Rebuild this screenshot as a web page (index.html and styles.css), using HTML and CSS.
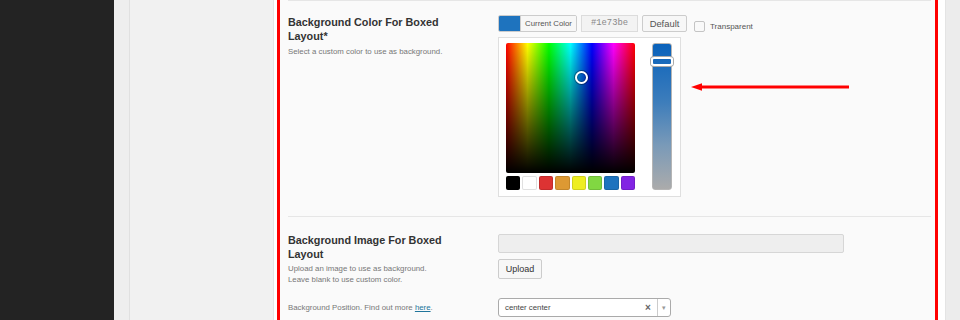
FILE: index.html
```html
<!DOCTYPE html>
<html lang="en">
<head>
    <meta charset="UTF-8">
    <title>Theme Options</title>
    <link rel="stylesheet" href="styles.css">
</head>
<body>

    <div class="sidebar"></div>
    <div class="gutter"></div>
    <div class="subnav"></div>

    <div class="main">
        <div class="highlight">

            <!-- Background colour -->
            <div class="field">
                <div class="field-label">
                    <h4>Background Color For Boxed Layout*</h4>
                    <p class="desc">Select a custom color to use as background.</p>
                </div>
                <div class="field-control">
                    <div class="color-controls">
                        <div class="color-result">
                            <span class="chip"></span>
                            <span class="chip-text">Current Color</span>
                        </div>
                        <div class="hex">#1e73be</div>
                        <div class="btn-default">Default</div>
                        <div class="transparent">
                            <span class="checkbox"></span>
                            <span>Transparent</span>
                        </div>
                    </div>

                    <div class="picker">
                        <div class="picker-left">
                            <div class="picker-square">
                                <span class="picker-marker"></span>
                            </div>
                            <div class="swatches">
                                <span class="swatch" style="background:#000000"></span>
                                <span class="swatch" style="background:#ffffff"></span>
                                <span class="swatch" style="background:#dd3333"></span>
                                <span class="swatch" style="background:#dd9933"></span>
                                <span class="swatch" style="background:#eeee22"></span>
                                <span class="swatch" style="background:#81d742"></span>
                                <span class="swatch" style="background:#1e73be"></span>
                                <span class="swatch" style="background:#8224e3"></span>
                            </div>
                        </div>
                        <div class="picker-slider">
                            <span class="slider-handle"></span>
                        </div>
                    </div>
                </div>

                <svg class="arrow" width="160" height="10" viewBox="0 0 160 10">
                    <line x1="8" y1="5" x2="158" y2="5" stroke="#ff0000" stroke-width="3"/>
                    <polygon points="0,5 11,1.3 11,8.7" fill="#ff0000"/>
                </svg>
            </div>

            <!-- Background image -->
            <div class="field stacked">
                <div class="subrow">
                    <div class="field-label">
                        <h4 class="shift">Background Image For Boxed Layout</h4>
                        <p class="desc">Upload an image to use as background.<br>Leave blank to use custom color.</p>
                    </div>
                    <div class="field-control">
                        <div class="text-input"></div>
                        <div class="btn-upload">Upload</div>
                    </div>
                </div>
                <div class="subrow position">
                    <div class="field-label">
                        <p class="desc">Background Position. Find out more <a href="#">here</a>.</p>
                    </div>
                    <div class="field-control">
                        <div class="select">
                            <span class="select-value">center center</span>
                            <span class="select-clear">&times;</span>
                            <span class="select-arrow">&#9662;</span>
                        </div>
                    </div>
                </div>
            </div>

        </div>
    </div>

    <div class="edge"></div>

</body>
</html>
```

FILE: styles.css
```css
* {
    box-sizing: border-box;
}
body {
    margin: 0;
    height: 320px;
    overflow: hidden;
    display: flex;
    background: #ececec;
    font-family: "Liberation Sans", Arial, sans-serif;
    color: #333;
}
.sidebar {
    width: 114px;
    flex: none;
    background: #232323;
}
.gutter {
    width: 16px;
    flex: none;
    background: #eeeeee;
    border-right: 1px solid #e0e0e0;
}
.subnav {
    width: 144px;
    flex: none;
    background: #f1f1f1;
    border-right: 1px solid #e4e4e4;
}
.main {
    width: 671px;
    flex: none;
    background: #fff;
    padding: 0 7px 0 3px;
}
.edge {
    flex: 1;
    background: #ececec;
    border-left: 1px solid #e4e4e4;
}
.highlight {
    height: 100%;
    background: #fafafa;
    border: 3px solid #ff0000;
    border-top: 0;
    border-bottom: 0;
    padding: 0 4px 0 8px;
}

/* fields */
.field {
    position: relative;
    display: flex;
    border-top: 1px solid #e6e6e6;
    padding: 14px 0 19px;
}
.field.stacked {
    flex-direction: column;
    padding-top: 17px;
}
.subrow {
    display: flex;
}
.subrow.position {
    margin-top: 13px;
    align-items: center;
}
.field-label {
    width: 210px;
    flex: none;
}
.field-label h4 {
    margin: 0;
    width: 165px;
    font-size: 10.8px;
    line-height: 14px;
    font-weight: bold;
    color: #333;
}
.field-label h4.shift {
    margin-top: -1px;
}
.desc {
    margin: 3px 0 0;
    font-size: 7.85px;
    line-height: 11px;
    color: #777;
}
.stacked .desc {
    margin-top: 2px;
}
.position .desc {
    margin: 0;
}
.desc a {
    color: #21759b;
}

/* colour controls */
.color-controls {
    display: flex;
    align-items: flex-start;
    height: 17px;
}
.color-result {
    display: flex;
    width: 79px;
    height: 17px;
    border: 1px solid #ccc;
    border-radius: 2px;
    overflow: hidden;
}
.chip {
    width: 21px;
    background: #1e73be;
}
.chip-text {
    flex: 1;
    background: #f7f7f7;
    border-left: 1px solid #ccc;
    font-size: 7.8px;
    line-height: 15px;
    color: #555;
    text-align: center;
}
.hex {
    margin-left: 4px;
    width: 57px;
    height: 17px;
    border: 1px solid #dcdcdc;
    background: #f3f3f3;
    font-family: "Liberation Mono", "DejaVu Sans Mono", monospace;
    font-size: 8.8px;
    line-height: 15px;
    color: #888;
    text-align: center;
}
.btn-default {
    margin-left: 4px;
    width: 45px;
    height: 17px;
    border: 1px solid #ccc;
    border-radius: 2px;
    background: #f7f7f7;
    font-size: 9.4px;
    line-height: 15px;
    color: #555;
    text-align: center;
}
.transparent {
    display: flex;
    align-items: center;
    gap: 5px;
    margin: 6px 0 0 7px;
    font-size: 8px;
    color: #555;
}
.checkbox {
    width: 11px;
    height: 11px;
    border: 1px solid #c4c4c4;
    border-radius: 2px;
    background: #f9f9f9;
}

/* picker */
.picker {
    display: flex;
    gap: 17px;
    margin-top: 5px;
    width: 183px;
    height: 160px;
    border: 1px solid #dfdfdf;
    background: #fff;
    padding: 5px 8px 6px 7px;
}
.picker-left {
    width: 129px;
}
.picker-square {
    position: relative;
    height: 130px;
    border-radius: 2px;
    background:
        linear-gradient(to bottom, rgba(0, 0, 0, 0) 0%, rgba(0, 0, 0, 0.45) 45%, #000 100%),
        linear-gradient(to right, #ff0000, #ffff00, #00ff00, #00ffff, #0000ff, #ff00ff, #ff0000);
}
.picker-marker {
    position: absolute;
    left: 69px;
    top: 28px;
    width: 13px;
    height: 13px;
    border: 2px solid #fff;
    border-radius: 50%;
    box-shadow: 0 0 0 1px rgba(0, 0, 0, 0.35), inset 0 0 0 1px rgba(0, 0, 0, 0.25);
}
.swatches {
    display: grid;
    grid-template-columns: repeat(8, 1fr);
    gap: 2px;
    margin-top: 3px;
    height: 14px;
}
.swatch {
    border: 1px solid rgba(0, 0, 0, 0.12);
    border-radius: 2px;
}
.picker-slider {
    position: relative;
    width: 20px;
    height: 147px;
    border: 1px solid #b5b5b5;
    border-radius: 3px;
    background: linear-gradient(to bottom, #0a62bb, #3d7dbb 40%, #7a9ab8 70%, #ababab);
}
.slider-handle {
    position: absolute;
    left: -2px;
    top: 13px;
    width: 22px;
    height: 9px;
    border: 2px solid #fff;
    border-radius: 3px;
    box-shadow: 0 0 0 1px #aaa;
}

.arrow {
    position: absolute;
    left: 403px;
    top: 81px;
}

/* image upload */
.text-input {
    width: 346px;
    height: 19px;
    border: 1px solid #d6d6d6;
    border-radius: 2px;
    background: #eeeeee;
}
.btn-upload {
    margin-top: 6px;
    width: 44px;
    height: 20px;
    border: 1px solid #ccc;
    border-radius: 2px;
    background: #f7f7f7;
    font-size: 9px;
    line-height: 18px;
    color: #333;
    text-align: center;
}
.select {
    display: flex;
    align-items: center;
    width: 173px;
    height: 19px;
    border: 1px solid #aaa;
    border-radius: 3px;
    background: #fff;
}
.select-value {
    flex: 1;
    padding-left: 6px;
    font-size: 7.8px;
    color: #444;
}
.select-clear {
    width: 12px;
    font-size: 10px;
    font-weight: bold;
    color: #666;
}
.select-arrow {
    width: 13px;
    height: 100%;
    border-left: 1px solid #ccc;
    font-size: 7px;
    line-height: 17px;
    color: #999;
    text-align: center;
}
```
